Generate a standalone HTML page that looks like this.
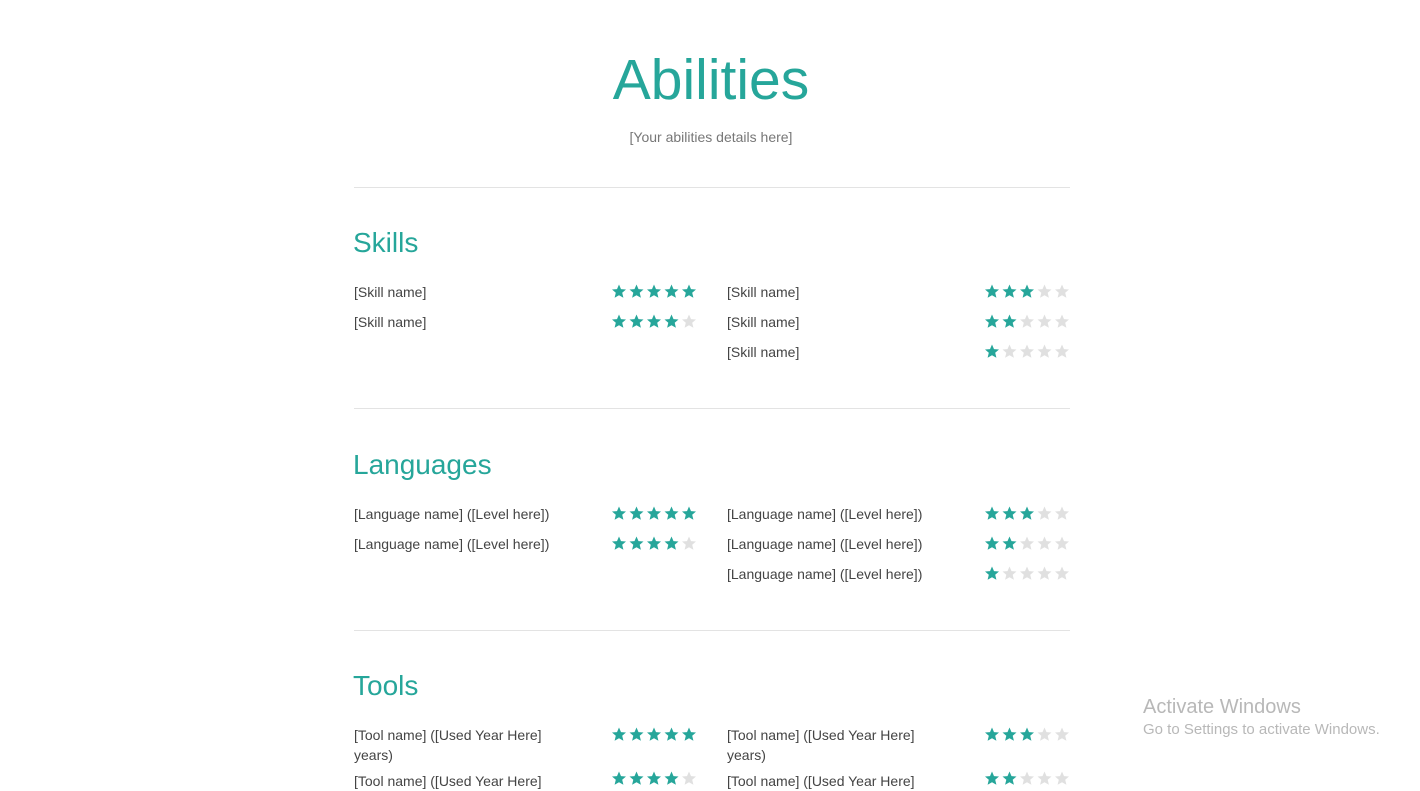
<!DOCTYPE html>
<html><head><meta charset="utf-8"><style>
body{margin:0;width:1420px;height:776px;overflow:hidden;background:#fff;font-family:"Liberation Sans",sans-serif;position:relative}
.a{position:absolute}
h1{position:absolute;margin:0;left:0;width:1422px;text-align:center;top:42px;font-size:57px;font-weight:normal;color:#26a69a;line-height:76px}
.sub{left:0;width:1422px;text-align:center;top:127px;font-size:14px;color:#777;line-height:20px}
.hr{left:354px;width:716px;height:1px;background:#e3e3e3}
.h{left:353px;font-size:28px;color:#26a69a;line-height:36px}
.t{font-size:14px;color:#444;line-height:20px}
svg.s{position:absolute;width:86px;height:16px}
.on{fill:#26a69a}.off{fill:#e0e0e0}
.w1{left:1143px;top:695px;font-size:20px;color:#b8b8b8;line-height:24px}
.w2{left:1143px;top:720px;font-size:15px;color:#b8b8b8;line-height:20px}
</style></head><body>
<svg width="0" height="0" style="position:absolute"><defs><polygon id="st" points="8,1.5 10,6.1 15,6.5 11.2,9.8 12.4,14.8 8,12.2 3.6,14.8 4.8,9.8 1,6.5 6,6.1"/></defs></svg>
<h1>Abilities</h1>
<div class="a sub">[Your abilities details here]</div>
<div class="a hr" style="top:187px"></div>
<div class="a h" style="top:225px">Skills</div>
<div class="a t" style="left:354px;top:282px">[Skill name]</div>
<div class="a t" style="left:354px;top:312px">[Skill name]</div>
<div class="a t" style="left:727px;top:282px">[Skill name]</div>
<div class="a t" style="left:727px;top:312px">[Skill name]</div>
<div class="a t" style="left:727px;top:342px">[Skill name]</div>
<svg class="s" style="left:611px;top:283px"><use href="#st" class="on" x="0"/><use href="#st" class="on" x="17.5"/><use href="#st" class="on" x="35"/><use href="#st" class="on" x="52.5"/><use href="#st" class="on" x="70"/></svg>
<svg class="s" style="left:611px;top:313px"><use href="#st" class="on" x="0"/><use href="#st" class="on" x="17.5"/><use href="#st" class="on" x="35"/><use href="#st" class="on" x="52.5"/><use href="#st" class="off" x="70"/></svg>
<svg class="s" style="left:984px;top:283px"><use href="#st" class="on" x="0"/><use href="#st" class="on" x="17.5"/><use href="#st" class="on" x="35"/><use href="#st" class="off" x="52.5"/><use href="#st" class="off" x="70"/></svg>
<svg class="s" style="left:984px;top:313px"><use href="#st" class="on" x="0"/><use href="#st" class="on" x="17.5"/><use href="#st" class="off" x="35"/><use href="#st" class="off" x="52.5"/><use href="#st" class="off" x="70"/></svg>
<svg class="s" style="left:984px;top:343px"><use href="#st" class="on" x="0"/><use href="#st" class="off" x="17.5"/><use href="#st" class="off" x="35"/><use href="#st" class="off" x="52.5"/><use href="#st" class="off" x="70"/></svg>

<div class="a hr" style="top:408px"></div>
<div class="a h" style="top:447px">Languages</div>
<div class="a t" style="left:354px;top:504px">[Language name] ([Level here])</div>
<div class="a t" style="left:354px;top:534px">[Language name] ([Level here])</div>
<div class="a t" style="left:727px;top:504px">[Language name] ([Level here])</div>
<div class="a t" style="left:727px;top:534px">[Language name] ([Level here])</div>
<div class="a t" style="left:727px;top:564px">[Language name] ([Level here])</div>
<svg class="s" style="left:611px;top:505px"><use href="#st" class="on" x="0"/><use href="#st" class="on" x="17.5"/><use href="#st" class="on" x="35"/><use href="#st" class="on" x="52.5"/><use href="#st" class="on" x="70"/></svg>
<svg class="s" style="left:611px;top:535px"><use href="#st" class="on" x="0"/><use href="#st" class="on" x="17.5"/><use href="#st" class="on" x="35"/><use href="#st" class="on" x="52.5"/><use href="#st" class="off" x="70"/></svg>
<svg class="s" style="left:984px;top:505px"><use href="#st" class="on" x="0"/><use href="#st" class="on" x="17.5"/><use href="#st" class="on" x="35"/><use href="#st" class="off" x="52.5"/><use href="#st" class="off" x="70"/></svg>
<svg class="s" style="left:984px;top:535px"><use href="#st" class="on" x="0"/><use href="#st" class="on" x="17.5"/><use href="#st" class="off" x="35"/><use href="#st" class="off" x="52.5"/><use href="#st" class="off" x="70"/></svg>
<svg class="s" style="left:984px;top:565px"><use href="#st" class="on" x="0"/><use href="#st" class="off" x="17.5"/><use href="#st" class="off" x="35"/><use href="#st" class="off" x="52.5"/><use href="#st" class="off" x="70"/></svg>

<div class="a hr" style="top:630px"></div>
<div class="a h" style="top:668px">Tools</div>
<div class="a t" style="left:354px;top:725px">[Tool name] ([Used Year Here]<br>years)</div>
<div class="a t" style="left:727px;top:725px">[Tool name] ([Used Year Here]<br>years)</div>
<div class="a t" style="left:354px;top:771px">[Tool name] ([Used Year Here]</div>
<div class="a t" style="left:727px;top:771px">[Tool name] ([Used Year Here]</div>
<svg class="s" style="left:611px;top:726px"><use href="#st" class="on" x="0"/><use href="#st" class="on" x="17.5"/><use href="#st" class="on" x="35"/><use href="#st" class="on" x="52.5"/><use href="#st" class="on" x="70"/></svg>
<svg class="s" style="left:984px;top:726px"><use href="#st" class="on" x="0"/><use href="#st" class="on" x="17.5"/><use href="#st" class="on" x="35"/><use href="#st" class="off" x="52.5"/><use href="#st" class="off" x="70"/></svg>
<svg class="s" style="left:611px;top:770px"><use href="#st" class="on" x="0"/><use href="#st" class="on" x="17.5"/><use href="#st" class="on" x="35"/><use href="#st" class="on" x="52.5"/><use href="#st" class="off" x="70"/></svg>
<svg class="s" style="left:984px;top:770px"><use href="#st" class="on" x="0"/><use href="#st" class="on" x="17.5"/><use href="#st" class="off" x="35"/><use href="#st" class="off" x="52.5"/><use href="#st" class="off" x="70"/></svg>

<div class="a w1">Activate Windows</div>
<div class="a w2">Go to Settings to activate Windows.</div>
</body></html>
